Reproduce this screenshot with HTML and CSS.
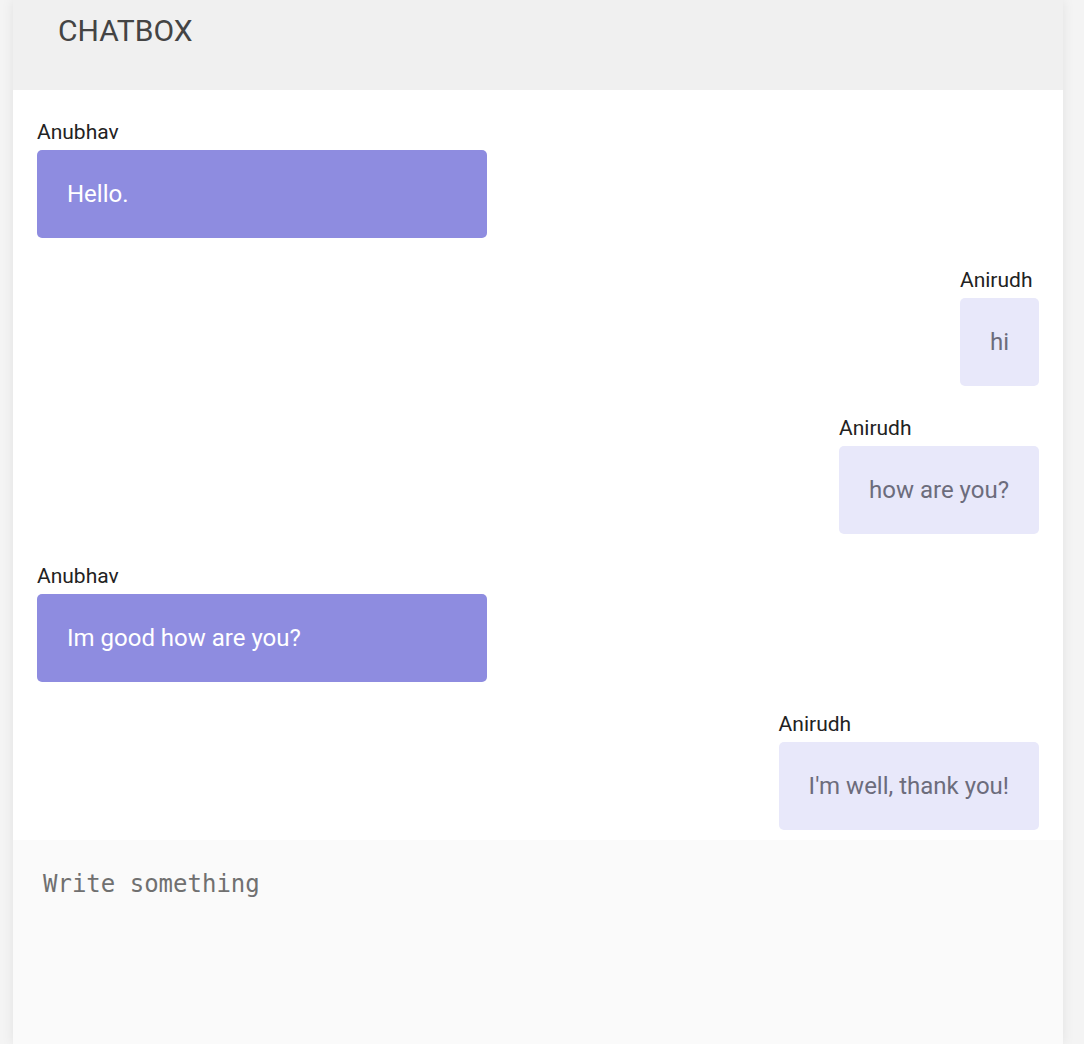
FILE: index.html
```html
<!DOCTYPE html>
<html>
<head>
<meta charset="utf-8">
<link rel="stylesheet" href="styles.css">
</head>
<body>
<div class="chatbox">
  <div class="header"><h2 class="title">CHATBOX</h2></div>
  <div class="messages">
    <div class="msg left">
      <div class="wrap">
        <div class="name">Anubhav</div>
        <div class="bubble">Hello.</div>
      </div>
    </div>
    <div class="msg right">
      <div class="wrap">
        <div class="name">Anirudh</div>
        <div class="bubble">hi</div>
      </div>
    </div>
    <div class="msg right">
      <div class="wrap">
        <div class="name">Anirudh</div>
        <div class="bubble">how are you?</div>
      </div>
    </div>
    <div class="msg left">
      <div class="wrap">
        <div class="name">Anubhav</div>
        <div class="bubble">Im good how are you?</div>
      </div>
    </div>
    <div class="msg right">
      <div class="wrap">
        <div class="name">Anirudh</div>
        <div class="bubble">I'm well, thank you!</div>
      </div>
    </div>
  </div>
  <textarea class="input" placeholder="Write something"></textarea>
</div>
</body>
</html>
```
FILE: styles.css
```css
html, body {
  margin: 0;
  padding: 0;
  background: #f4f4f4;
  height: 100%;
  overflow: hidden;
}
body {
  font-family: Roboto, "Liberation Sans", sans-serif;
}
.chatbox {
  margin: 0 21px 0 13px;
  width: 1050px;
  height: 1044px;
  background: #fafafa;
  box-shadow: 0 0 12px rgba(0,0,0,0.08);
  display: flex;
  flex-direction: column;
}
.header {
  height: 90px;
  background: #f0f0f0;
  box-sizing: border-box;
  padding: 13px 45px 0;
}
.title {
  margin: 0;
  font-size: 30px;
  font-weight: 400;
  color: #444;
  line-height: 36px;
}
.messages {
  background: #fff;
  padding: 32px 24px 10px;
  display: flex;
  flex-direction: column;
  gap: 32px;
}
.msg {
  display: flex;
}
.msg.left { justify-content: flex-start; }
.msg.right { justify-content: flex-end; }
.wrap {
  display: flex;
  flex-direction: column;
}
.name {
  font-size: 21px;
  color: #222;
  line-height: 20px;
  margin-bottom: 8px;
  white-space: nowrap;
}
.bubble {
  box-sizing: border-box;
  height: 88px;
  padding: 0 30px;
  display: flex;
  align-items: center;
  font-size: 24px;
  border-radius: 5px;
  white-space: nowrap;
}
.msg.left .bubble {
  width: 450px;
  background: #8e8ce0;
  color: #fff;
}
.msg.right .bubble {
  background: #e8e8fa;
  color: #6c6c7c;
}
.input {
  flex: 1;
  display: block;
  border: none;
  outline: none;
  resize: none;
  background: #fafafa;
  padding: 30px 30px;
  margin: 0;
  font-family: "DejaVu Sans Mono", monospace;
  font-size: 24px;
  color: #333;
}
.input::placeholder {
  color: #707070;
}
```
